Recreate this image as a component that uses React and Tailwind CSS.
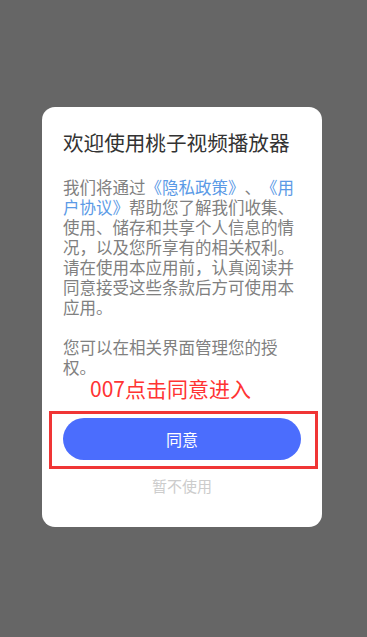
export default function App() {
  return (
    <div
      className="w-full h-[637px] bg-[#666666] flex items-start pl-[42px] pt-[107px] [text-spacing-trim:space-all]"
      style={{ fontFamily: '"Noto Sans CJK SC", "Noto Sans", sans-serif' }}
    >
      {/* Dialog */}
      <div className="relative w-[280px] bg-white rounded-[13px] px-[21px] pt-[21px] pb-[31px] flex flex-col">
        <h1 className="text-[20.6px] leading-[28px] text-[#333333] font-normal">欢迎使用桃子视频播放器</h1>

        <div className="mt-[21px] text-[16.5px] leading-[20px] text-[#808080]">
          <p>
            我们将通过<span className="text-[#5b9ae6]">《隐私政策》</span>、<span className="text-[#5b9ae6]">《用户协议》</span>帮助您了解我们收集、使用、储存和共享个人信息的情况，以及您所享有的相关权利。请在使用本应用前，认真阅读并同意接受这些条款后方可使用本应用。
          </p>
          <p className="mt-[20px]">您可以在相关界面管理您的授权。</p>
        </div>

        <button className="mt-[41px] h-[42px] w-full rounded-full bg-[#4b6dfd] text-white text-[16px] leading-[20px]">
          同意
        </button>
        <button className="mt-[16px] text-[15px] leading-[20px] text-[#cccccc] self-center">暂不使用</button>

        {/* annotation overlay */}
        <span className="absolute left-[48px] top-[271px] text-[21px] leading-[21px] text-[#ff3333]">007点击同意进入</span>
        <div className="absolute left-[7px] top-[304px] w-[269px] h-[58px] border-[3px] border-[#f03535]" />
      </div>
    </div>
  );
}
